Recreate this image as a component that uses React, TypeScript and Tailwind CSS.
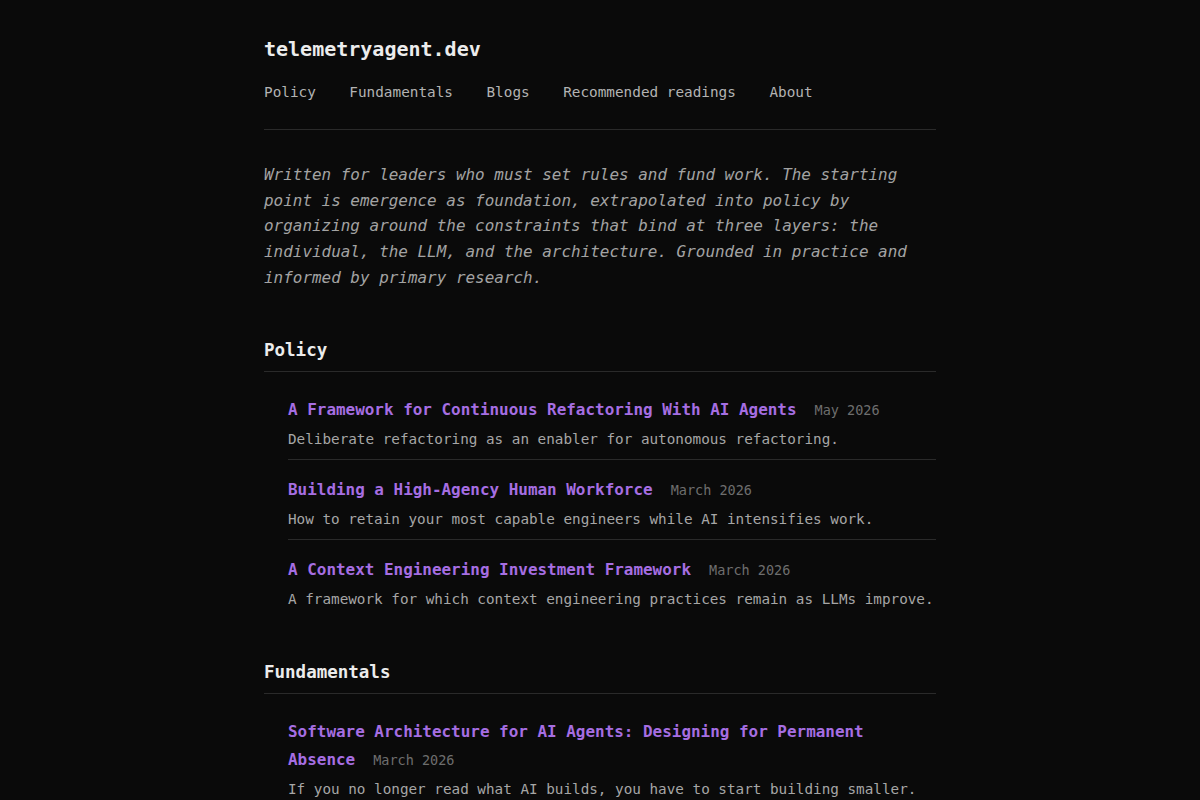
import React from "react";

type Post = { title: string; date: string; summary: string };

const policy: Post[] = [
  {
    title: "A Framework for Continuous Refactoring With AI Agents",
    date: "May 2026",
    summary: "Deliberate refactoring as an enabler for autonomous refactoring.",
  },
  {
    title: "Building a High-Agency Human Workforce",
    date: "March 2026",
    summary: "How to retain your most capable engineers while AI intensifies work.",
  },
  {
    title: "A Context Engineering Investment Framework",
    date: "March 2026",
    summary: "A framework for which context engineering practices remain as LLMs improve.",
  },
];

const fundamentals: Post[] = [
  {
    title: "Software Architecture for AI Agents: Designing for Permanent Absence",
    date: "March 2026",
    summary: "If you no longer read what AI builds, you have to start building smaller.",
  },
];

const navItems = ["Policy", "Fundamentals", "Blogs", "Recommended readings", "About"];

function Section({ name, posts }: { name: string; posts: Post[] }) {
  return (
    <section className="mb-[41px]">
      <h2 className="text-[17.5px] leading-[25px] font-bold text-[#ececec] pb-2 border-b border-[#2a2a2a]">
        {name}
      </h2>
      <ul className="pl-6 pt-2">
        {posts.map((p, i) => (
          <li
            key={p.title}
            className={
              i < posts.length - 1
                ? "pt-4 pb-2 border-b border-[#2a2a2a]"
                : "pt-4 pb-2"
            }
          >
            <div className="text-[15.95px] leading-[28px]">
              <a href="#" className="text-[#a66ee2] font-semibold">
                {p.title}
              </a>
              <span className="ml-[18px] text-[13.5px] text-[#6e6e6e]">{p.date}</span>
            </div>
            <p className="mt-[3px] text-[14.3px] leading-[24px] text-[#a6a6a6] whitespace-nowrap">
              {p.summary}
            </p>
          </li>
        ))}
      </ul>
    </section>
  );
}

export default function App() {
  return (
    <div
      className="min-h-screen bg-[#0a0a0a] text-[#d0d0d0]"
      style={{ fontFamily: '"DejaVu Sans Mono", "Liberation Mono", monospace' }}
    >
      <div className="max-w-[672px] mx-auto pt-[35px]">
        <header className="border-b border-[#2a2a2a] pb-[25px]">
          <h1 className="text-[20px] leading-[28px] font-semibold text-[#ececec]">
            telemetryagent.dev
          </h1>
          <nav className="mt-[17px] flex gap-[33.5px] text-[14.35px] leading-[24px] text-[#b3b3b3]">
            {navItems.map((n) => (
              <a key={n} href="#">
                {n}
              </a>
            ))}
          </nav>
        </header>
        <p className="mt-[32px] mb-[47px] italic text-[15.95px] leading-[25.7px] text-[#a3a3a3]">
          Written for leaders who must set rules and fund work. The starting point is
          emergence as foundation, extrapolated into policy by organizing around the
          constraints that bind at three layers: the individual, the LLM, and the
          architecture. Grounded in practice and informed by primary research.
        </p>
        <Section name="Policy" posts={policy} />
        <Section name="Fundamentals" posts={fundamentals} />
      </div>
    </div>
  );
}
